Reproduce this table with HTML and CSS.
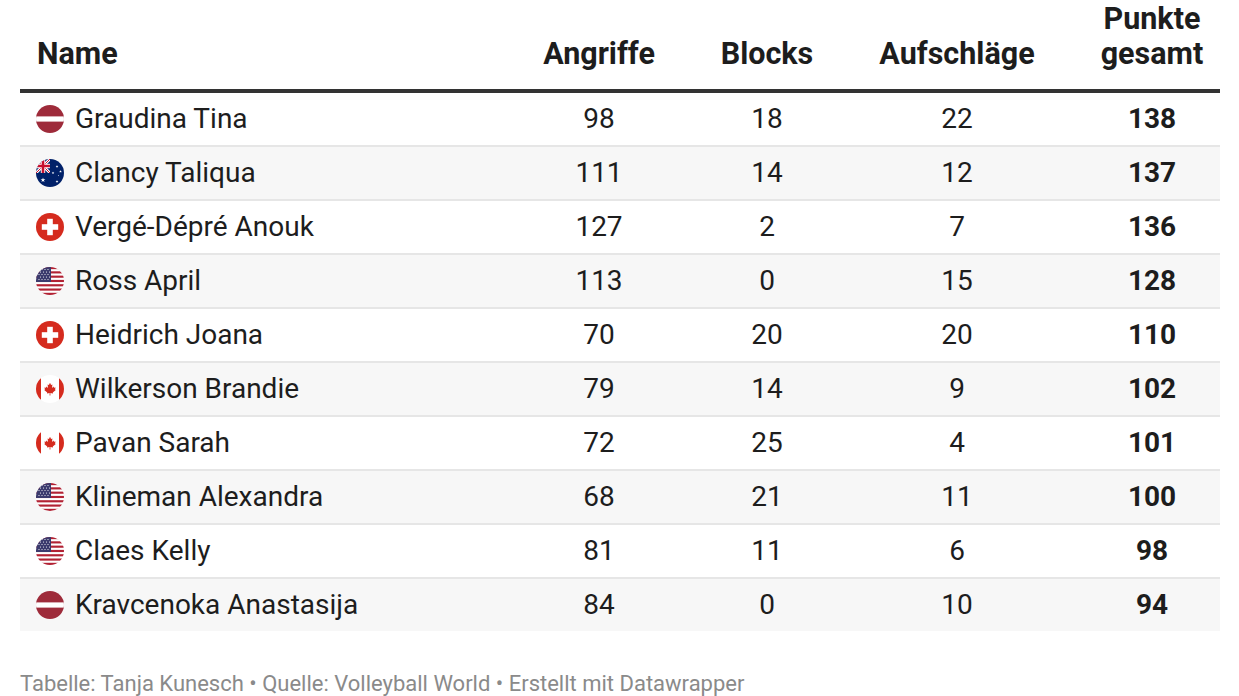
FILE: index.html
```html
<!DOCTYPE html>
<html lang="de">
<head>
<meta charset="utf-8">
<title>Punkte gesamt</title>
<link rel="stylesheet" href="styles.css">
</head>
<body>
<svg class="defs" width="0" height="0" aria-hidden="true">
  <defs>
    <clipPath id="circ"><circle cx="14" cy="14" r="14"/></clipPath>
    <clipPath id="canton"><rect x="0" y="0" width="14" height="14"/></clipPath>
    <polygon id="star" points="0,-1 0.225,-0.309 0.951,-0.309 0.363,0.118 0.588,0.809 0,0.382 -0.588,0.809 -0.363,0.118 -0.951,-0.309 -0.225,-0.309"/>
    <symbol id="lv" viewBox="0 0 28 28">
      <g clip-path="url(#circ)">
        <rect width="28" height="28" fill="#9e2b3a"/>
        <rect y="11.4" width="28" height="5.2" fill="#fff"/>
      </g>
    </symbol>
    <symbol id="ch" viewBox="0 0 28 28">
      <circle cx="14" cy="14" r="14" fill="#d52b1e"/>
      <rect x="11.2" y="5.8" width="5.6" height="16.4" fill="#fff"/>
      <rect x="5.8" y="11.2" width="16.4" height="5.6" fill="#fff"/>
    </symbol>
    <symbol id="us" viewBox="0 0 28 28">
      <g clip-path="url(#circ)">
        <rect width="28" height="28" fill="#fff"/>
        <rect y="0" width="28" height="2.15" fill="#b22234"/>
        <rect y="4.3" width="28" height="2.15" fill="#b22234"/>
        <rect y="8.6" width="28" height="2.15" fill="#b22234"/>
        <rect y="12.9" width="28" height="2.15" fill="#b22234"/>
        <rect y="17.2" width="28" height="2.15" fill="#b22234"/>
        <rect y="21.5" width="28" height="2.15" fill="#b22234"/>
        <rect y="25.8" width="28" height="2.2" fill="#b22234"/>
        <rect width="15" height="15" fill="#3c3b6e"/>
        <g fill="#fff">
          <circle cx="3" cy="2.5" r="0.55"/><circle cx="6" cy="2.5" r="0.55"/><circle cx="9" cy="2.5" r="0.55"/><circle cx="12" cy="2.5" r="0.55"/>
          <circle cx="4.5" cy="5" r="0.55"/><circle cx="7.5" cy="5" r="0.55"/><circle cx="10.5" cy="5" r="0.55"/><circle cx="13.5" cy="5" r="0.55"/>
          <circle cx="3" cy="7.5" r="0.55"/><circle cx="6" cy="7.5" r="0.55"/><circle cx="9" cy="7.5" r="0.55"/><circle cx="12" cy="7.5" r="0.55"/>
          <circle cx="4.5" cy="10" r="0.55"/><circle cx="7.5" cy="10" r="0.55"/><circle cx="10.5" cy="10" r="0.55"/><circle cx="13.5" cy="10" r="0.55"/>
          <circle cx="3" cy="12.5" r="0.55"/><circle cx="6" cy="12.5" r="0.55"/><circle cx="9" cy="12.5" r="0.55"/><circle cx="12" cy="12.5" r="0.55"/>
        </g>
      </g>
    </symbol>
    <symbol id="ca" viewBox="0 0 28 28">
      <g clip-path="url(#circ)">
        <rect width="28" height="28" fill="#fff"/>
        <rect x="0" width="5" height="28" fill="#d52b1e"/>
        <rect x="23" width="5" height="28" fill="#d52b1e"/>
        <polygon fill="#d52b1e" points="14,7.8 15.1,10.1 16.4,9.4 16,13 17.6,11.5 18,12.8 19.6,12.4 19,14.5 19.8,15.1 16.8,17.4 17.1,18.5 14.4,18.1 14.4,20.6 13.6,20.6 13.6,18.1 10.9,18.5 11.2,17.4 8.2,15.1 9,14.5 8.4,12.4 10,12.8 10.4,11.5 12,13 11.6,9.4 12.9,10.1"/>
      </g>
    </symbol>
    <symbol id="au" viewBox="0 0 28 28">
      <g clip-path="url(#circ)">
        <rect width="28" height="28" fill="#012169"/>
        <g clip-path="url(#canton)">
          <path d="M0,0 L14,14 M14,0 L0,14" stroke="#fff" stroke-width="2.8"/>
          <path d="M0,0 L14,14 M14,0 L0,14" stroke="#c8102e" stroke-width="1"/>
          <path d="M7,0 V14 M0,7 H14" stroke="#fff" stroke-width="4.4"/>
          <path d="M7,0 V14 M0,7 H14" stroke="#c8102e" stroke-width="2.6"/>
        </g>
        <g fill="#fff">
          <use href="#star" transform="translate(7,21) scale(2.6)"/>
          <use href="#star" transform="translate(21,7.5) scale(1.4)"/>
          <use href="#star" transform="translate(17,14) scale(1.4)"/>
          <use href="#star" transform="translate(24.5,12.5) scale(1.4)"/>
          <use href="#star" transform="translate(21,22.5) scale(1.5)"/>
          <use href="#star" transform="translate(22.5,16.5) scale(0.8)"/>
        </g>
      </g>
    </symbol>
  </defs>
</svg>

<table class="stats">
  <colgroup>
    <col class="c-name">
    <col class="c-att">
    <col class="c-blk">
    <col class="c-srv">
    <col class="c-tot">
  </colgroup>
  <thead>
    <tr>
      <th class="name">Name</th>
      <th>Angriffe</th>
      <th>Blocks</th>
      <th>Aufschläge</th>
      <th>Punkte<br>gesamt</th>
    </tr>
  </thead>
  <tbody>
    <tr><td class="name"><span class="player"><svg class="flag"><use href="#lv"/></svg>Graudina Tina</span></td><td>98</td><td>18</td><td>22</td><td class="total">138</td></tr>
    <tr><td class="name"><span class="player"><svg class="flag"><use href="#au"/></svg>Clancy Taliqua</span></td><td>111</td><td>14</td><td>12</td><td class="total">137</td></tr>
    <tr><td class="name"><span class="player"><svg class="flag"><use href="#ch"/></svg>Vergé-Dépré Anouk</span></td><td>127</td><td>2</td><td>7</td><td class="total">136</td></tr>
    <tr><td class="name"><span class="player"><svg class="flag"><use href="#us"/></svg>Ross April</span></td><td>113</td><td>0</td><td>15</td><td class="total">128</td></tr>
    <tr><td class="name"><span class="player"><svg class="flag"><use href="#ch"/></svg>Heidrich Joana</span></td><td>70</td><td>20</td><td>20</td><td class="total">110</td></tr>
    <tr><td class="name"><span class="player"><svg class="flag"><use href="#ca"/></svg>Wilkerson Brandie</span></td><td>79</td><td>14</td><td>9</td><td class="total">102</td></tr>
    <tr><td class="name"><span class="player"><svg class="flag"><use href="#ca"/></svg>Pavan Sarah</span></td><td>72</td><td>25</td><td>4</td><td class="total">101</td></tr>
    <tr><td class="name"><span class="player"><svg class="flag"><use href="#us"/></svg>Klineman Alexandra</span></td><td>68</td><td>21</td><td>11</td><td class="total">100</td></tr>
    <tr><td class="name"><span class="player"><svg class="flag"><use href="#us"/></svg>Claes Kelly</span></td><td>81</td><td>11</td><td>6</td><td class="total">98</td></tr>
    <tr><td class="name"><span class="player"><svg class="flag"><use href="#lv"/></svg>Kravcenoka Anastasija</span></td><td>84</td><td>0</td><td>10</td><td class="total">94</td></tr>
  </tbody>
</table>

<p class="footer">Tabelle: Tanja Kunesch • Quelle: Volleyball World • Erstellt mit Datawrapper</p>
</body>
</html>
```

FILE: styles.css
```css
html, body {
  margin: 0;
  padding: 0;
  background: #fff;
}

body {
  font-family: Roboto, "Liberation Sans", Arial, sans-serif;
  color: #1d1d1d;
}

.defs {
  position: absolute;
  width: 0;
  height: 0;
  overflow: hidden;
}

.stats {
  margin-left: 20px;
  width: 1200px;
  table-layout: fixed;
  border-collapse: collapse;
  border-spacing: 0;
}

.c-name { width: 474px; }
.c-att { width: 210px; }
.c-blk { width: 126px; }
.c-srv { width: 254px; }
.c-tot { width: 136px; }

.stats th {
  font-size: 30.5px;
  font-weight: 700;
  line-height: 35px;
  text-align: center;
  vertical-align: bottom;
  padding: 1px 0 18px;
  border-bottom: 4px solid #333;
  color: #1d1d1d;
}

.stats th.name {
  text-align: left;
  padding-left: 17px;
}

.stats td {
  height: 52px;
  padding: 0;
  font-size: 28px;
  line-height: 52px;
  text-align: center;
  vertical-align: middle;
  border-bottom: 2px solid #e6e6e6;
  color: #1d1d1d;
}

.stats tbody tr:nth-child(even) td {
  background: #f7f7f7;
}

.stats tbody tr:last-child td {
  border-bottom: none;
}

.stats td.name {
  text-align: left;
  padding-left: 16px;
}

.player {
  display: flex;
  align-items: center;
  gap: 11px;
}

.flag {
  width: 28px;
  height: 28px;
  flex: none;
}

.stats td.total {
  font-weight: 700;
}

.footer {
  margin: 40px 0 0 20px;
  font-size: 22px;
  line-height: 26px;
  color: #8a8a8a;
}
```
